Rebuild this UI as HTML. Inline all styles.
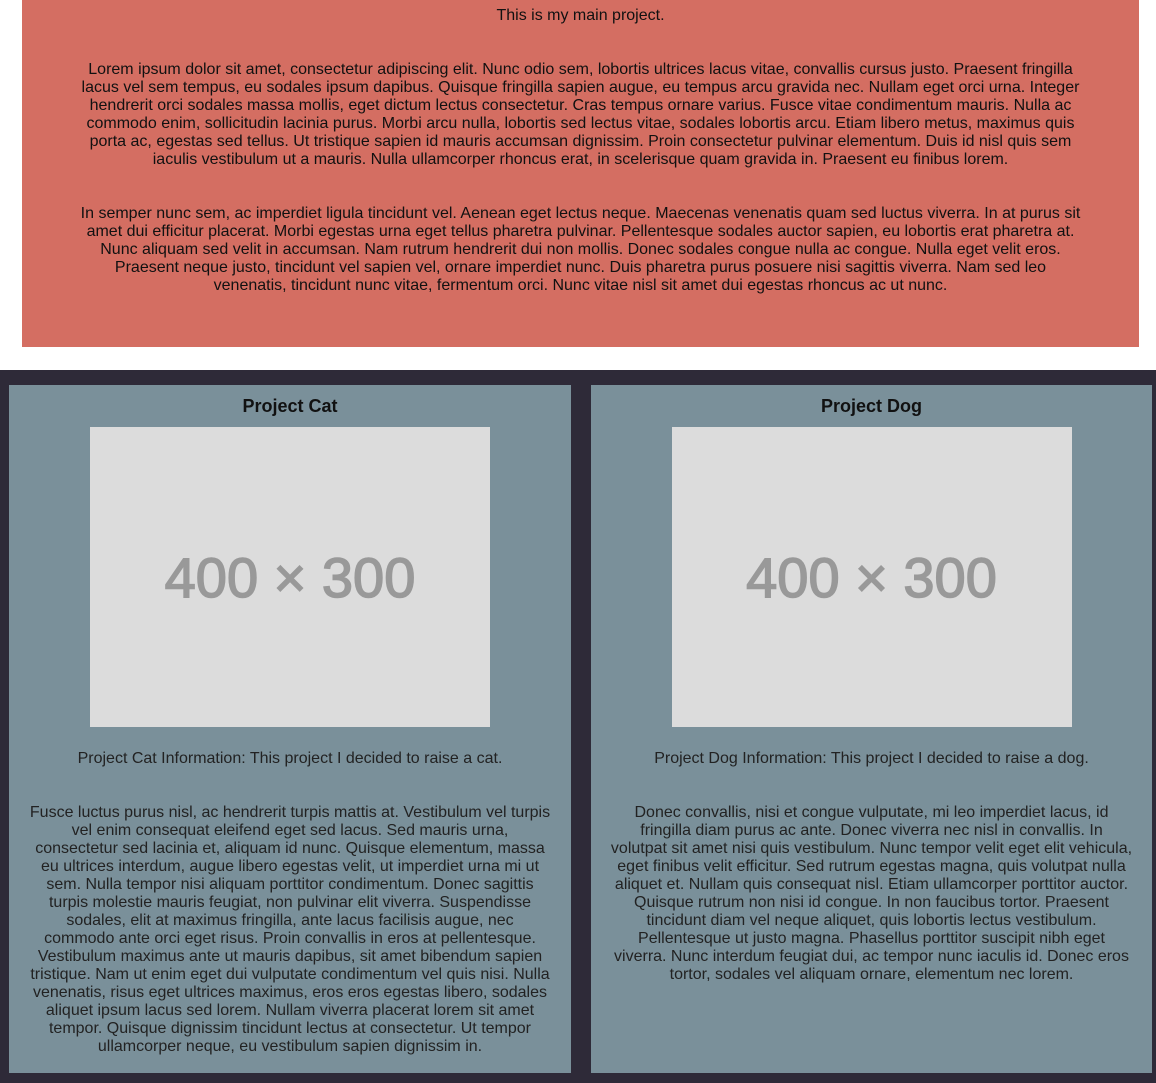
<!DOCTYPE html>
<html><head><style>
*{margin:0;padding:0;box-sizing:border-box}
body{width:1156px;height:1083px;background:#fff;font-family:"Liberation Sans",Arial,sans-serif;font-size:16px;line-height:18px;color:#111;position:relative;overflow:hidden}
.main{position:absolute;left:22px;top:0;width:1117px;height:347px;background:#d46e62;text-align:center;padding:7px 58px 0}
.main p{margin-bottom:36px}
.dark{position:absolute;left:0;top:370px;width:1156px;height:713px;background:#2e2a38}
.card{position:absolute;top:15px;width:562px;height:688px;background:#7a909a;text-align:center;padding:11px 20px 0;color:#222}
.card h2{font-size:18px;line-height:20px;font-weight:bold;color:#111;margin-bottom:11px}
.img{width:400px;height:300px;background:#dcdcdc;margin:0 auto 23px;display:flex;align-items:center;justify-content:center;font-size:56px;color:#999;line-height:56px;padding-top:2px;-webkit-text-stroke:1.5px #999}
.card p.info{margin-bottom:36px}
.nw{white-space:nowrap}
</style></head><body>
<div class="main">
<p>This is my main project.</p>
<p>Lorem ipsum dolor sit amet, consectetur adipiscing elit. Nunc odio sem, lobortis ultrices lacus vitae, convallis cursus justo. Praesent fringilla lacus vel sem tempus, eu sodales ipsum dapibus. Quisque fringilla sapien augue, eu tempus arcu gravida nec. Nullam eget orci urna. Integer hendrerit orci sodales massa mollis, eget dictum lectus consectetur. Cras tempus ornare varius. Fusce vitae condimentum mauris. Nulla ac commodo enim, sollicitudin lacinia purus. Morbi arcu nulla, lobortis sed lectus vitae, sodales lobortis arcu. Etiam libero metus, maximus quis porta ac, egestas sed tellus. Ut tristique sapien id mauris accumsan dignissim. Proin consectetur pulvinar elementum. Duis id nisl quis sem iaculis vestibulum ut a mauris. Nulla ullamcorper rhoncus erat, in scelerisque quam gravida in. Praesent eu finibus lorem.</p>
<p>In semper nunc sem, ac imperdiet ligula tincidunt vel. Aenean eget lectus neque. Maecenas venenatis quam sed luctus viverra. In at purus sit amet dui efficitur placerat. Morbi egestas urna eget tellus pharetra pulvinar. Pellentesque sodales auctor sapien, eu lobortis erat pharetra at. Nunc aliquam sed velit in accumsan. Nam rutrum hendrerit dui non mollis. Donec sodales congue nulla ac congue. Nulla eget velit eros. Praesent neque justo, tincidunt vel sapien vel, ornare imperdiet nunc. Duis pharetra purus posuere nisi sagittis viverra. Nam sed leo venenatis, tincidunt nunc vitae, fermentum orci. Nunc vitae nisl sit amet dui egestas rhoncus ac ut nunc.</p>
</div>
<div class="dark">
<div class="card" style="left:9px">
<h2>Project Cat</h2>
<div class="img">400 × 300</div>
<p class="info">Project Cat Information: This project I decided to raise a cat.</p>
<p>Fusce luctus purus nisl, ac hendrerit turpis mattis at. Vestibulum vel turpis vel enim consequat eleifend eget sed lacus. Sed mauris urna, consectetur sed lacinia et, aliquam id nunc. Quisque elementum, massa eu ultrices interdum, augue libero egestas velit, ut imperdiet urna mi ut sem. Nulla tempor nisi aliquam porttitor condimentum. Donec sagittis turpis molestie mauris feugiat, non pulvinar elit viverra. Suspendisse sodales, elit at maximus fringilla, ante lacus facilisis augue, nec commodo ante orci eget risus. Proin convallis in eros at pellentesque. Vestibulum maximus ante ut mauris dapibus, sit amet bibendum sapien tristique. Nam ut enim eget dui vulputate condimentum vel quis nisi. Nulla venenatis, risus eget ultrices maximus, eros eros egestas libero, sodales aliquet ipsum lacus sed lorem. Nullam viverra placerat lorem sit amet tempor. Quisque dignissim tincidunt lectus at consectetur. Ut tempor ullamcorper neque, eu vestibulum sapien dignissim in.</p>
</div>
<div class="card" style="left:591px;width:561px;padding-left:10px;padding-right:10px">
<h2>Project Dog</h2>
<div class="img">400 × 300</div>
<p class="info">Project Dog Information: This project I decided to raise a dog.</p>
<p class="nw">Donec convallis, nisi et congue vulputate, mi leo imperdiet lacus, id<br>fringilla diam purus ac ante. Donec viverra nec nisl in convallis. In<br>volutpat sit amet nisi quis vestibulum. Nunc tempor velit eget elit vehicula,<br>eget finibus velit efficitur. Sed rutrum egestas magna, quis volutpat nulla<br>aliquet et. Nullam quis consequat nisl. Etiam ullamcorper porttitor auctor.<br>Quisque rutrum non nisi id congue. In non faucibus tortor. Praesent<br>tincidunt diam vel neque aliquet, quis lobortis lectus vestibulum.<br>Pellentesque ut justo magna. Phasellus porttitor suscipit nibh eget<br>viverra. Nunc interdum feugiat dui, ac tempor nunc iaculis id. Donec eros<br>tortor, sodales vel aliquam ornare, elementum nec lorem.</p>
</div>
</div>
</body></html>
